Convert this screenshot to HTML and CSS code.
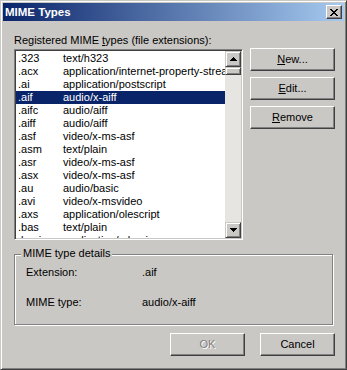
FILE: index.html
```html
<!DOCTYPE html>
<html lang="en">
<head>
  <meta charset="UTF-8" />
  <title>MIME Types</title>
  <link rel="stylesheet" href="styles.css">
</head>
<body>
  <div class="window">
    <div class="titlebar">
      <span class="title">MIME Types</span>
      <button class="close">
        <svg width="8" height="7" viewBox="0 0 8 7" shape-rendering="crispEdges"><path d="M0 0h2v1H0zM6 0h2v1H6zM1 1h2v1H1zM5 1h2v1H5zM2 2h4v1H2zM3 3h2v1H3zM2 4h4v1H2zM1 5h2v1H1zM5 5h2v1H5zM0 6h2v1H0zM6 6h2v1H6z" fill="#000"/></svg>
      </button>
    </div>

    <div class="content">
      <div class="top">
        <!-- List of types -->
        <div class="list-col">
          <div class="label">Registered MIME <u>t</u>ypes (file extensions):</div>
          <div class="listbox">
            <ul class="rows">
              <li><span class="ext">.323</span><span>text/h323</span></li>
              <li><span class="ext">.acx</span><span>application/internet-property-stream</span></li>
              <li><span class="ext">.ai</span><span>application/postscript</span></li>
              <li class="selected"><span class="ext">.aif</span><span>audio/x-aiff</span></li>
              <li><span class="ext">.aifc</span><span>audio/aiff</span></li>
              <li><span class="ext">.aiff</span><span>audio/aiff</span></li>
              <li><span class="ext">.asf</span><span>video/x-ms-asf</span></li>
              <li><span class="ext">.asm</span><span>text/plain</span></li>
              <li><span class="ext">.asr</span><span>video/x-ms-asf</span></li>
              <li><span class="ext">.asx</span><span>video/x-ms-asf</span></li>
              <li><span class="ext">.au</span><span>audio/basic</span></li>
              <li><span class="ext">.avi</span><span>video/x-msvideo</span></li>
              <li><span class="ext">.axs</span><span>application/olescript</span></li>
              <li><span class="ext">.bas</span><span>text/plain</span></li>
              <li><span class="ext">.bcpio</span><span>application/x-bcpio</span></li>
            </ul>
            <div class="vscroll">
              <div class="sbtn">
                <svg width="7" height="4" viewBox="0 0 7 4" shape-rendering="crispEdges"><path d="M3 0h1v1h1v1h1v1h1v1H0V3h1V2h1V1h1z" fill="#000"/></svg>
              </div>
              <div class="thumb"></div>
              <div class="track"></div>
              <div class="sbtn">
                <svg width="7" height="4" viewBox="0 0 7 4" shape-rendering="crispEdges"><path d="M0 0h7v1H6v1H5v1H4v1H3V3H2V2H1V1H0z" fill="#000"/></svg>
              </div>
            </div>
          </div>
        </div>

        <!-- Side buttons -->
        <div class="side-buttons">
          <button class="btn"><u>N</u>ew...</button>
          <button class="btn"><u>E</u>dit...</button>
          <button class="btn"><u>R</u>emove</button>
        </div>
      </div>

      <!-- Details group -->
      <div class="group">
        <span class="group-title">MIME type details</span>
        <div class="details">
          <span>Extension:</span><span>.aif</span>
          <span>MIME type:</span><span>audio/x-aiff</span>
        </div>
      </div>

      <div class="footer">
        <button class="btn wide" disabled>OK</button>
        <button class="btn wide">Cancel</button>
      </div>
    </div>
  </div>
</body>
</html>
```

FILE: styles.css
```css
body {
  margin: 0;
  font-family: "Liberation Sans", Arial, sans-serif;
  font-size: 11px;
  line-height: 13px;
  color: #000;
}

.window {
  width: 347px;
  height: 370px;
  box-sizing: border-box;
  background: #cac8c4;
  border: 1px solid;
  border-color: #cac8c4 #404040 #404040 #cac8c4;
  box-shadow: inset 1px 1px #fff, inset -1px -1px #808080;
  padding: 2px;
}

.titlebar {
  height: 18px;
  display: flex;
  align-items: center;
  padding-left: 2px;
  background: linear-gradient(to right, #0a246a, #a6caf0);
}

.title {
  flex: 1;
  color: #fff;
  font-weight: bold;
  font-size: 11.5px;
}

.close {
  width: 16px;
  height: 14px;
  margin-right: 2px;
  padding: 0;
  display: flex;
  align-items: center;
  justify-content: center;
  background: #cac8c4;
  border: 1px solid;
  border-color: #fff #404040 #404040 #fff;
  box-shadow: inset -1px -1px #808080;
}

.content {
  padding: 13px 9px 0 11px;
}

.top {
  display: flex;
}

.list-col {
  width: 229px;
}

.label {
  height: 13px;
}

.listbox {
  margin-top: 2px;
  height: 191px;
  box-sizing: border-box;
  display: flex;
  border: 1px solid;
  border-color: #808080 #fff #fff #808080;
  box-shadow: inset 1px 1px #404040, inset -1px -1px #cac8c4;
  padding: 1px;
}

.rows {
  flex: 1;
  margin: 0;
  padding: 1px 0 0;
  list-style: none;
  background: #fff;
  overflow: hidden;
}

.rows li {
  height: 13px;
  display: flex;
  padding-left: 2px;
  white-space: nowrap;
}

.rows .ext {
  width: 45px;
  flex: none;
}

.rows li.selected {
  background: #0a246a;
  color: #fff;
}

.vscroll {
  width: 16px;
  display: flex;
  flex-direction: column;
  background: #e6e5e2;
}

.sbtn, .thumb {
  box-sizing: border-box;
  background: #cac8c4;
  border: 1px solid;
  border-color: #cac8c4 #404040 #404040 #cac8c4;
  box-shadow: inset 1px 1px #fff, inset -1px -1px #808080;
}

.sbtn {
  height: 16px;
  display: flex;
  align-items: center;
  justify-content: center;
}

.thumb {
  height: 8px;
}

.track {
  flex: 1;
}

.side-buttons {
  margin-left: auto;
  padding-top: 14px;
  display: flex;
  flex-direction: column;
  gap: 6px;
}

.btn {
  width: 85px;
  height: 23px;
  padding: 0;
  font: inherit;
  color: #000;
  background: #cac8c4;
  border: 1px solid;
  border-color: #fff #404040 #404040 #fff;
  box-shadow: inset -1px -1px #808080;
}

.btn.wide {
  width: 75px;
}

.btn:disabled {
  color: #808080;
  text-shadow: 1px 1px #fff;
}

.group {
  position: relative;
  margin-top: 14px;
  width: 319px;
  height: 71px;
  box-sizing: border-box;
  border: 1px solid #808080;
  box-shadow: inset 1px 1px #fff, 1px 1px #fff;
  padding: 11px 0 0 11px;
}

.group-title {
  position: absolute;
  top: -8px;
  left: 6px;
  padding: 0 2px;
  background: #cac8c4;
}

.details {
  display: grid;
  grid-template-columns: 116px auto;
  row-gap: 17px;
}

.footer {
  margin-top: 8px;
  display: flex;
  justify-content: flex-end;
  gap: 15px;
}
```
